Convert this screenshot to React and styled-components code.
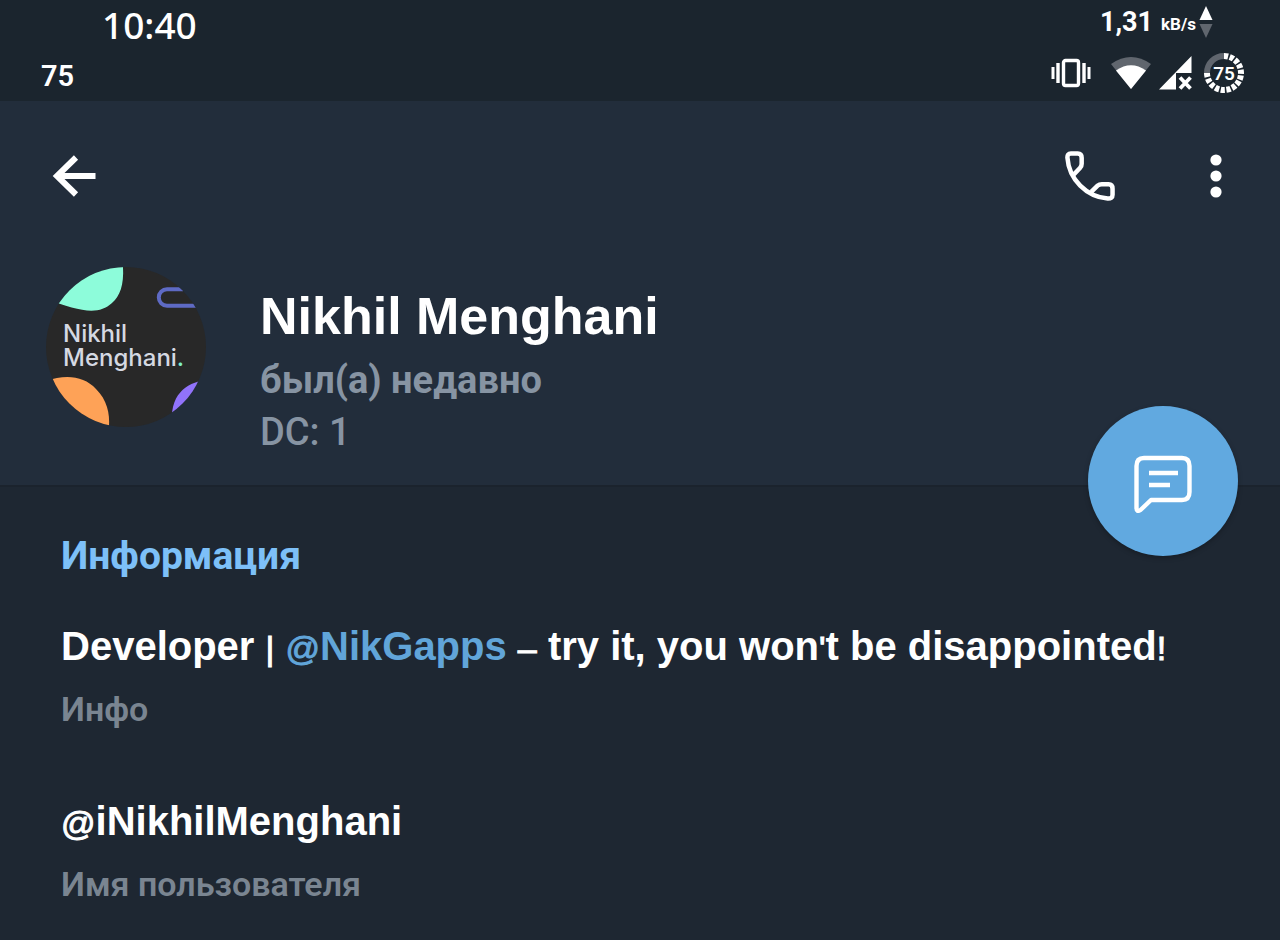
import React from "react";
import styled, { createGlobalStyle } from "styled-components";

const GlobalStyle = createGlobalStyle`
  * { box-sizing: border-box; }
  body { margin: 0; background: #1e2732; }
  h1, h2, p, dl, dd, dt { margin: 0; }
`;

const latin = '"Liberation Sans", Arial, sans-serif';
const roboto = 'Roboto, "Noto Sans", sans-serif';

const Screen = styled.div`
  min-height: 100vh;
  background: #1e2732;
  color: #fff;
  font-family: ${latin};
`;

const StatusBar = styled.div`
  display: flex;
  justify-content: space-between;
  height: 101px;
  padding: 0 36px 0 41px;
  background: #1b252e;
  font-family: ${roboto};
`;

const StatusSide = styled.div`
  display: flex;
  flex-direction: column;
  align-items: ${(p) => (p.$end ? "flex-end" : "flex-start")};
`;

const Clock = styled.time`
  padding-left: 61px;
  font: 500 37px/50px "Noto Sans", "Open Sans", sans-serif;
`;

const BatteryText = styled.span`
  font-size: 29px;
  font-weight: 600;
  line-height: 52px;
`;

const Speed = styled.div`
  display: flex;
  align-items: center;
  gap: 8px;
  height: 44px;
  padding-right: 31px;
  font-size: 27px;
  font-weight: 700;
`;

const Unit = styled.span`
  font-size: 17px;
  line-height: 20px;
  padding-top: 4px;
`;

const Rate = styled.span`
  display: flex;
  align-items: center;
  gap: 3px;
`;

const StatusIcons = styled.div`
  display: flex;
  align-items: center;
  height: 57px;
`;

const StatusIcon = styled.svg`
  display: block;
  margin-left: ${(p) => p.$gap || 0}px;
`;

const Header = styled.header`
  position: relative;
  background: #222d3b;
  padding-bottom: 27px;
  border-bottom: 2px solid #1b232d;
`;

const Toolbar = styled.nav`
  display: flex;
  align-items: center;
  gap: 54px;
  height: 150px;
  padding: 0 28px 0 38px;
`;

const IconButton = styled.button`
  display: grid;
  place-items: center;
  width: 72px;
  height: 72px;
  padding: 0;
  border: 0;
  background: none;
  color: #fff;
  cursor: pointer;
`;

const Spacer = styled.div`
  flex: 1;
`;

const Profile = styled.div`
  display: flex;
  gap: 54px;
  padding: 16px 46px 0;
`;

const ProfileText = styled.div`
  padding-top: 19px;
`;

const Name = styled.h1`
  margin-bottom: 8px;
  font-size: 52px;
  line-height: 60px;
`;

const Status = styled.p`
  color: #8794a3;
  font-family: ${roboto};
  font-size: 38px;
  font-weight: ${(p) => p.$weight};
  line-height: 52px;
`;

const Fab = styled.button`
  position: absolute;
  right: 42px;
  bottom: -71px;
  display: grid;
  place-items: center;
  width: 150px;
  height: 150px;
  padding: 6px 0 0;
  border: 0;
  border-radius: 50%;
  background: #61a9e0;
  box-shadow: 0 2px 5px rgba(0, 0, 0, 0.25);
  cursor: pointer;
`;

const Info = styled.main`
  padding: 45px 61px 20px;
`;

const SectionTitle = styled.h2`
  color: #7dc0f8;
  font-family: ${roboto};
  font-size: 39px;
  font-weight: 700;
  line-height: 48px;
`;

const Entry = styled.dl`
  display: flex;
  flex-direction: column-reverse;
  margin-top: ${(p) => p.$top}px;
`;

const Value = styled.dd`
  font-size: 40px;
  font-weight: 700;
  line-height: 56px;
`;

const Label = styled.dt`
  margin-top: 9px;
  color: #7a8591;
  font-family: ${roboto};
  font-size: 34px;
  font-weight: 600;
  line-height: 48px;
`;

const Symbol = styled.span`
  font-size: 34px;
  font-weight: 400;
  -webkit-text-stroke: 1px currentColor;
`;

const Mention = styled.a`
  color: #61a5d9;
  text-decoration: none;
`;

function Avatar() {
  return (
    <svg width="160" height="160" viewBox="0 0 160 160" role="img" aria-label="Nikhil Menghani">
      <defs>
        <clipPath id="round">
          <circle cx="80" cy="80" r="80" />
        </clipPath>
      </defs>
      <g clipPath="url(#round)">
        <rect width="160" height="160" fill="#282828" />
        <path d="M0 0H77C78 18 74 29 66 36C52 49 33 44 0 32Z" fill="#8dfcda" />
        <path d="M0 114C20 107 38 109 50 122C61 133 64 146 63 160H0Z" fill="#fea257" />
        <path d="M160 113C139 116 123 128 126 160H160Z" fill="#9173fb" />
        <path d="M137 22.3H121A8.2 8.2 0 0 0 121 38.7H150" fill="none" stroke="#5e6ac4" strokeWidth="4" />
        <g fill="#d5d9e2" fontFamily="Inter, sans-serif" fontSize="24" fontWeight="500">
          <text x="17" y="75">Nikhil</text>
          <text x="17" y="99">Menghani<tspan fill="#7ff0cb">.</tspan></text>
        </g>
      </g>
    </svg>
  );
}

function VibrateIcon() {
  return (
    <StatusIcon width="40" height="30" viewBox="0 0 40 30" fill="none" stroke="#fff">
      <rect x="12.500" y="2.500" width="15" height="25" rx="2" strokeWidth="3.4" />
      <path d="M2 9V21M38 9V21" strokeWidth="3" />
      <path d="M7 5V25M33 5V25" strokeWidth="3.4" />
    </StatusIcon>
  );
}

function WifiIcon() {
  return (
    <StatusIcon $gap={20} width="40" height="34" viewBox="0 0 40 34">
      <path d="M0 8Q20 -6 40 8L20 33Z" fill="#60666e" />
      <path d="M5 14.5Q20 4 35 14.5L20 33Z" fill="#fff" />
    </StatusIcon>
  );
}

function SignalIcon() {
  return (
    <StatusIcon $gap={8} width="33" height="34" viewBox="0 0 33 34">
      <path d="M32.500 0V17H17V33.500H0Z" fill="#fff" />
      <path d="M21 21.500L31.500 32.500M31.500 21.500L21 32.500" stroke="#fff" strokeWidth="3.8" />
    </StatusIcon>
  );
}

function BatteryIcon() {
  return (
    <StatusIcon $gap={12} width="40" height="40" viewBox="0 0 40 40">
      <path d="M3 20A17 17 0 0 1 20 3" fill="none" stroke="#60666e" strokeWidth="6" />
      <path
        d="M20 3A17 17 0 1 1 3 20"
        fill="none"
        stroke="#fff"
        strokeWidth="6"
        strokeDasharray="4.200 1.600"
      />
      <text x="20" y="27" textAnchor="middle" fill="#fff" fontFamily="Roboto, sans-serif" fontSize="19" fontWeight="600">
        75
      </text>
    </StatusIcon>
  );
}

export default function App() {
  return (
    <>
      <GlobalStyle />
      <Screen>
        <StatusBar>
          <StatusSide>
            <Clock>10:40</Clock>
            <BatteryText>75</BatteryText>
          </StatusSide>
          <StatusSide $end>
            <Speed>
              <span>1,31</span>
              <Rate>
                <Unit>kB/s</Unit>
                <svg width="14" height="32" viewBox="0 0 14 32">
                  <path d="M7 0L13.500 14H0.500Z" fill="#fff" />
                  <path d="M7 32L13.500 18H0.500Z" fill="#60666e" />
                </svg>
              </Rate>
            </Speed>
            <StatusIcons>
              <VibrateIcon />
              <WifiIcon />
              <SignalIcon />
              <BatteryIcon />
            </StatusIcons>
          </StatusSide>
        </StatusBar>

        <Header>
          <Toolbar>
            <IconButton aria-label="Назад">
              <svg width="44" height="44" viewBox="0 0 44 44" fill="none" stroke="#fff" strokeWidth="6">
                <path d="M43.500 22H5M24 3.500L5 22L24 40.500" />
              </svg>
            </IconButton>
            <Spacer />
            <IconButton aria-label="Позвонить">
              <svg width="50" height="50" viewBox="0 0 51 51" fill="none" stroke="#fff" strokeWidth="4.600" strokeLinejoin="round">
                <path d="M8.500 24.500L15.500 17Q17 15.500 17 13V7Q17 2.500 13 2.500H6Q2.200 2.500 2.500 7C4 29 22 46.500 43.500 48.500Q48.500 48.800 48.500 44.500V38.500Q48.500 34 44.500 34H37.500Q35 34 33 35.500L27 41.500" />
              </svg>
            </IconButton>
            <IconButton aria-label="Меню">
              <svg width="12" height="44" viewBox="0 0 12 44" fill="#fff">
                <circle cx="6" cy="6" r="5.600" />
                <circle cx="6" cy="22" r="5.600" />
                <circle cx="6" cy="38" r="5.600" />
              </svg>
            </IconButton>
          </Toolbar>
          <Profile>
            <Avatar />
            <ProfileText>
              <Name>Nikhil Menghani</Name>
              <Status $weight={700}>был(а) недавно</Status>
              <Status $weight={500}>DC: 1</Status>
            </ProfileText>
          </Profile>
          <Fab aria-label="Написать сообщение">
            <svg width="58" height="58" viewBox="0 0 58 58" fill="none" stroke="#fff" strokeWidth="4.400" strokeLinejoin="round">
              <path d="M10 3H48Q55.500 3 55.500 11V37Q55.500 45 48 45H17L6.500 55Q2.500 57.500 2.500 53V11Q2.500 3 10 3Z" />
              <path d="M15 18H44M15 30H36" strokeLinecap="butt" />
            </svg>
          </Fab>
        </Header>

        <Info>
          <SectionTitle>Информация</SectionTitle>
          <Entry $top={38}>
            <Label>Инфо</Label>
            <Value>
              Developer <Symbol>|</Symbol>{" "}
              <Mention href="#nikgapps">
                <Symbol>@</Symbol>NikGapps
              </Mention>{" "}
              <Symbol>–</Symbol> try it, you won<Symbol>'</Symbol>t be disappointed<Symbol>!</Symbol>
            </Value>
          </Entry>
          <Entry $top={60}>
            <Label>Имя пользователя</Label>
            <Value>
              <Symbol>@</Symbol>iNikhilMenghani
            </Value>
          </Entry>
        </Info>
      </Screen>
    </>
  );
}
